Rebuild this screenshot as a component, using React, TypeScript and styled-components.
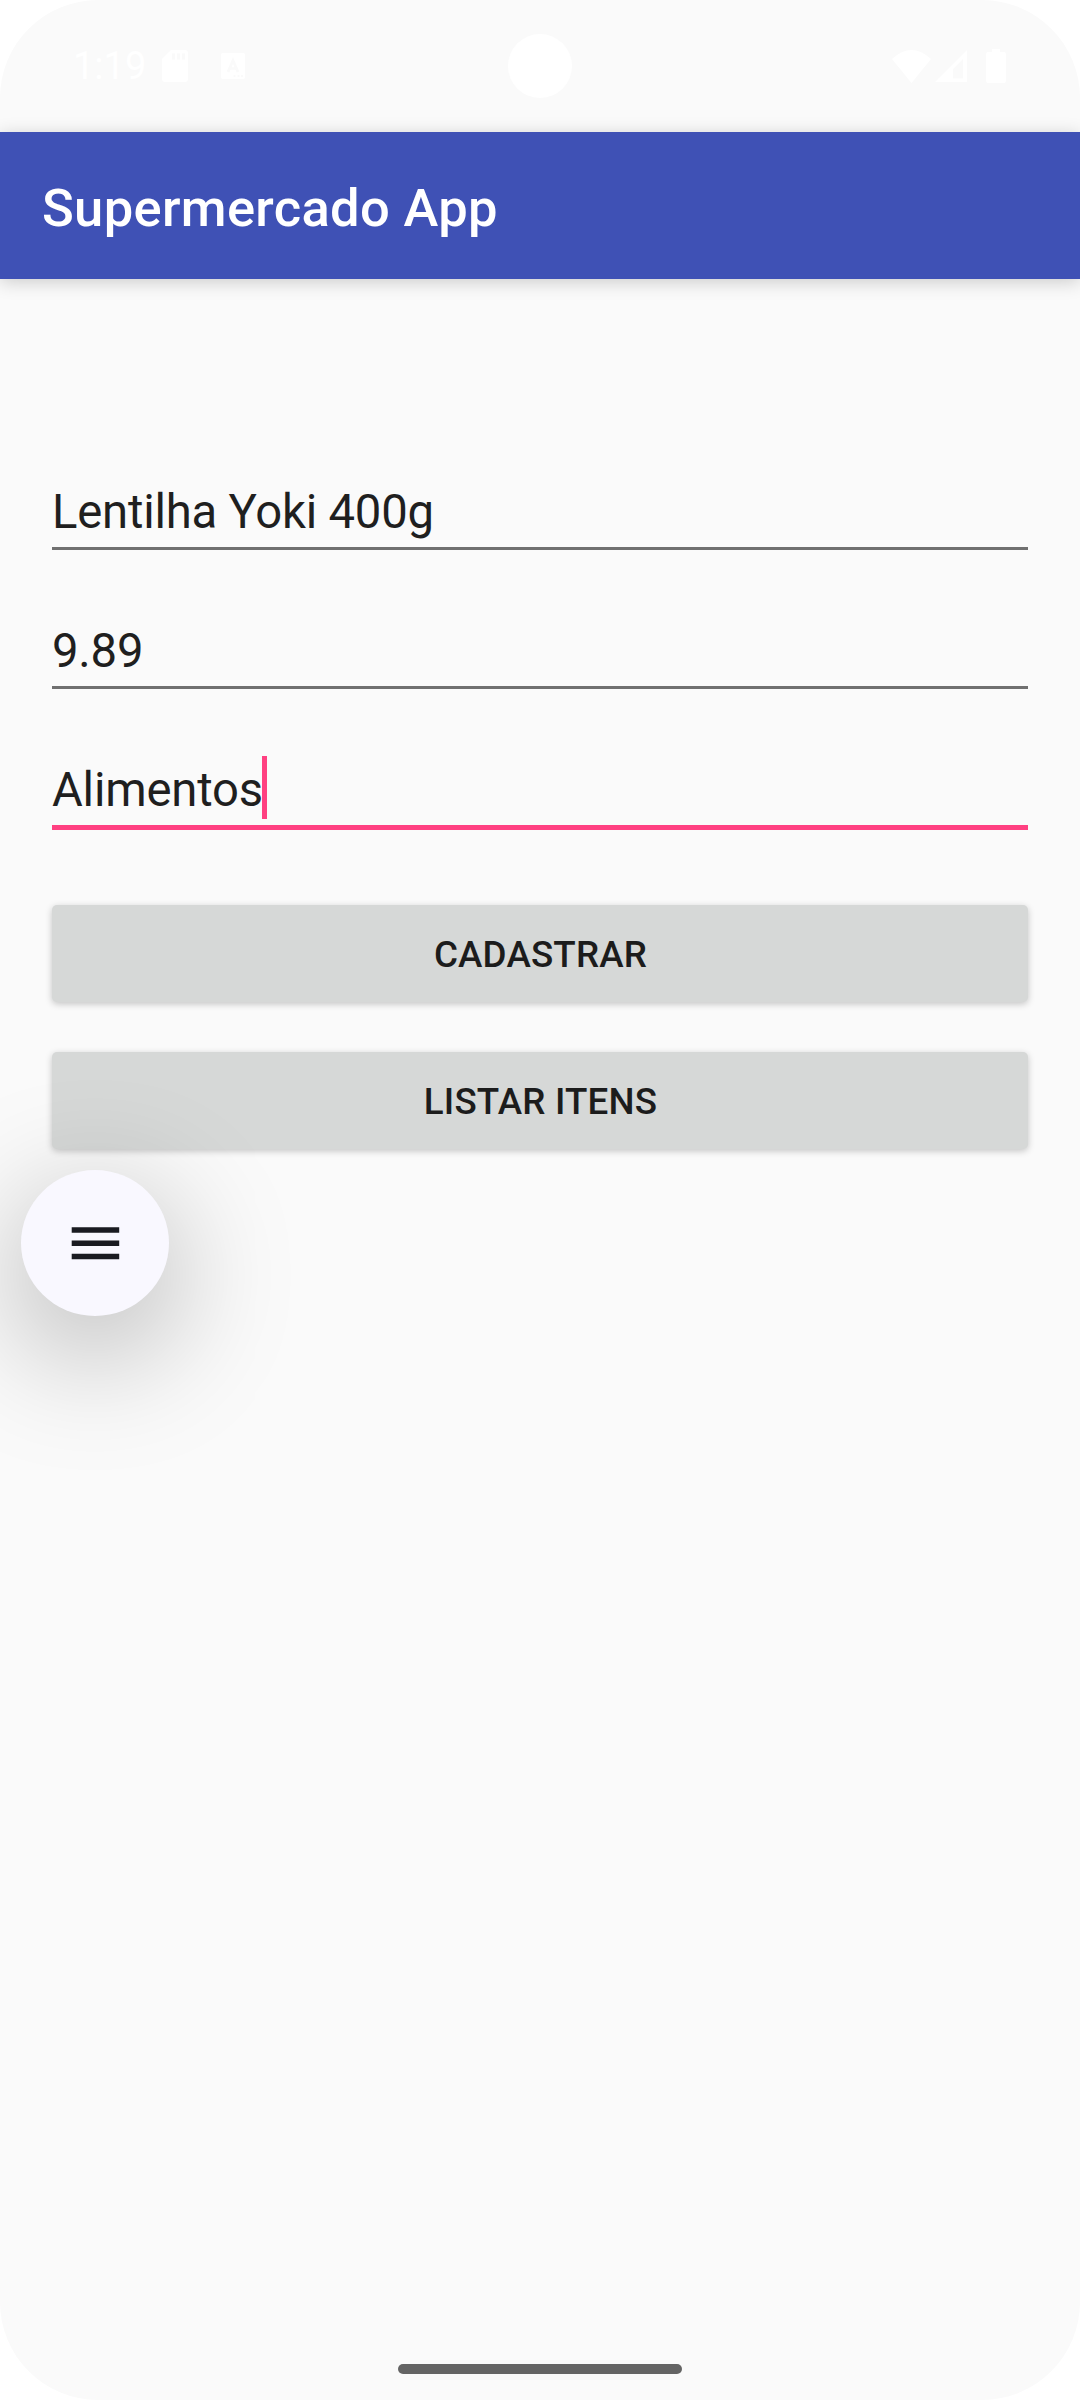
import React from "react";
import styled, { createGlobalStyle } from "styled-components";

const GlobalStyle = createGlobalStyle`
  * { box-sizing: border-box; }
  body { margin: 0; background: #ffffff; }
`;

const Screen = styled.div`
  display: flex;
  flex-direction: column;
  position: relative;
  width: 1080px;
  height: 2400px;
  overflow: hidden;
  border-radius: 98px;
  background: #fafafa;
  color: #1f1f1f;
  font-family: Roboto, "Liberation Sans", sans-serif;
`;

const StatusBar = styled.header`
  display: flex;
  align-items: center;
  justify-content: space-between;
  flex: none;
  height: 132px;
  padding: 0 74px 0 73px;
  color: #ffffff;
`;

const StatusGroup = styled.div<{ $end?: boolean }>`
  display: flex;
  flex: 1;
  align-items: center;
  justify-content: ${(p) => (p.$end ? "flex-end" : "flex-start")};
`;

const Clock = styled.span`
  width: 89px;
  font-size: 38px;
  line-height: 44px;
`;

const StatusIcon = styled.svg<{ $gap: number }>`
  flex: none;
  display: block;
  margin-left: ${(p) => p.$gap}px;
`;

const Camera = styled.div`
  width: 64px;
  height: 64px;
  border-radius: 50%;
  background: #ffffff;
`;

const AppBar = styled.div`
  display: flex;
  align-items: center;
  flex: none;
  height: 147px;
  padding: 4px 42px 0;
  background: #3f51b5;
  box-shadow: 0 3px 17px rgba(0, 0, 0, 0.19);
`;

const Title = styled.h1`
  margin: 0;
  color: #ffffff;
  font-size: 52.5px;
  font-weight: 500;
  line-height: 62px;
  letter-spacing: 0.33px;
`;

const Form = styled.main`
  display: flex;
  flex-direction: column;
  flex: 1;
  padding: 199px 52px 0;
`;

const Fields = styled.div`
  display: flex;
  flex-direction: column;
  gap: 65px;
`;

const Field = styled.div<{ $focused?: boolean }>`
  display: flex;
  flex-direction: column;
  height: 74px;

  &::after {
    content: "";
    height: ${(p) => (p.$focused ? 5 : 3)}px;
    background: ${(p) => (p.$focused ? "#ff4081" : "#707070")};
  }
`;

const FieldValue = styled.div`
  display: flex;
  align-items: flex-start;
  height: 69px;
  font-size: 47.25px;
  line-height: 68px;
  letter-spacing: -0.21px;
  white-space: pre;
`;

const Caret = styled.span`
  flex: none;
  width: 5px;
  height: 63px;
  margin-left: -1px;
  background: #ff4081;
`;

const Actions = styled.div`
  display: flex;
  flex-direction: column;
  gap: 50px;
  padding-top: 75px;
`;

const Button = styled.button`
  height: 97px;
  padding: 2px 0 0 1px;
  border: 0;
  border-radius: 5px;
  background: #d6d8d7;
  box-shadow: 0 2px 7px rgba(0, 0, 0, 0.22);
  color: #1c1c1c;
  font-family: inherit;
  font-size: 36.75px;
  font-weight: 500;
  line-height: 44px;
  letter-spacing: 0.18px;
`;

const FloatingMenu = styled.div`
  position: absolute;
  left: 21px;
  top: 1170px;
  display: flex;
  align-items: center;
  justify-content: center;
  width: 148px;
  height: 146px;
  border-radius: 50%;
  background: #f9f8ff;
  box-shadow: 0 32px 120px 8px rgba(0, 0, 0, 0.26);
`;

const MenuIcon = styled.svg`
  display: block;
  width: 50px;
  height: 34px;
  fill: #1a1b21;
`;

const Navigation = styled.footer`
  display: flex;
  justify-content: center;
  flex: none;
  height: 36px;
`;

const HomeHandle = styled.div`
  width: 284px;
  height: 10px;
  border-radius: 5px;
  background: #646464;
`;

export default function App() {
  return (
    <>
      <GlobalStyle />
      <Screen>
        <StatusBar>
          <StatusGroup>
            <Clock>1:19</Clock>
            <StatusIcon $gap={0} width="26" height="32" viewBox="0 0 26 32">
              <path d="M9 0H23a3 3 0 0 1 3 3V29a3 3 0 0 1-3 3H3a3 3 0 0 1-3-3V9Z" fill="#fff" />
              <path d="M10 3.500h3v6h-3zM15 3.500h3v6h-3zM20 3.500h3v6h-3z" fill="#fafafa" />
            </StatusIcon>
            <StatusIcon $gap={33} width="24" height="26" viewBox="0 0 24 26">
              <rect width="24" height="26" rx="2" fill="#fff" />
              <path d="M7 19 12 7.500 17 19M9 15.500h6" fill="none" stroke="#fafafa" strokeWidth="2.700" />
              <path d="M12.500 22h2v2h-2zM16.500 22h2v2h-2zM20 22h2v2h-2z" fill="#fafafa" />
            </StatusIcon>
          </StatusGroup>
          <Camera />
          <StatusGroup $end>
            <StatusIcon $gap={0} width="39" height="33" viewBox="0 0 39 33">
              <path d="M0 9Q19.500-9 39 9L19.500 33Z" fill="#fff" />
            </StatusIcon>
            <StatusIcon $gap={4} width="32" height="32" viewBox="0 0 32 32">
              <path fillRule="evenodd" d="M32 0V32H0ZM28 9 18 19V28.500H28Z" fill="#fff" />
            </StatusIcon>
            <StatusIcon $gap={19} width="20" height="34" viewBox="0 0 20 34">
              <path d="M6 0H14V3H18a2 2 0 0 1 2 2V32a2 2 0 0 1-2 2H2a2 2 0 0 1-2-2V5a2 2 0 0 1 2-2H6Z" fill="#fff" />
            </StatusIcon>
          </StatusGroup>
        </StatusBar>
        <AppBar>
          <Title>Supermercado App</Title>
        </AppBar>
        <Form>
          <Fields>
            <Field>
              <FieldValue>Lentilha Yoki 400g</FieldValue>
            </Field>
            <Field>
              <FieldValue>9.89</FieldValue>
            </Field>
            <Field $focused>
              <FieldValue>
                Alimentos
                <Caret />
              </FieldValue>
            </Field>
          </Fields>
          <Actions>
            <Button>CADASTRAR</Button>
            <Button>LISTAR ITENS</Button>
          </Actions>
        </Form>
        <Navigation>
          <HomeHandle />
        </Navigation>
        <FloatingMenu>
          <MenuIcon viewBox="0 0 50 34">
            <path d="M1.700 1.300h47.500v5.500h-47.500zM1.700 14.400h47.500v5.500h-47.500zM1.700 27.700h47.500v5.500h-47.500z" />
          </MenuIcon>
        </FloatingMenu>
      </Screen>
    </>
  );
}
